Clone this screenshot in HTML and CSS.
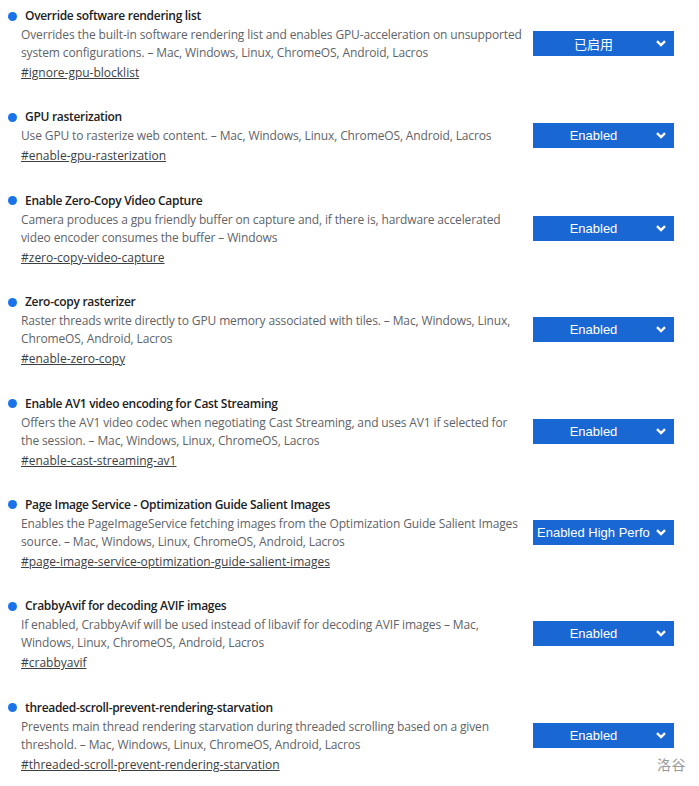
FILE: index.html
```html
<!DOCTYPE html>
<html lang="en">
<head>
<meta charset="utf-8">
<title>Flags</title>
<link rel="stylesheet" href="styles.css">
</head>
<body>
<div class="list">
  <div class="experiment">
    <div class="text">
      <div class="title"><span class="dot"></span>Override software rendering list</div>
      <p class="desc">Overrides the built-in software rendering list and enables GPU-acceleration on unsupported system configurations. – Mac, Windows, Linux, ChromeOS, Android, Lacros</p>
      <a class="link" href="#ignore-gpu-blocklist">#ignore-gpu-blocklist</a>
    </div>
    <div class="select"><span class="label cjk">已启用</span><svg class="chev" width="10" height="7" viewBox="0 0 10 7"><path d="M1 1.2 L5 5 L9 1.2" fill="none" stroke="#fff" stroke-width="2.4"/></svg></div>
  </div>
  <div class="experiment">
    <div class="text">
      <div class="title"><span class="dot"></span>GPU rasterization</div>
      <p class="desc">Use GPU to rasterize web content. – Mac, Windows, Linux, ChromeOS, Android, Lacros</p>
      <a class="link" href="#enable-gpu-rasterization">#enable-gpu-rasterization</a>
    </div>
    <div class="select"><span class="label">Enabled</span><svg class="chev" width="10" height="7" viewBox="0 0 10 7"><path d="M1 1.2 L5 5 L9 1.2" fill="none" stroke="#fff" stroke-width="2.4"/></svg></div>
  </div>
  <div class="experiment">
    <div class="text">
      <div class="title"><span class="dot"></span>Enable Zero-Copy Video Capture</div>
      <p class="desc">Camera produces a gpu friendly buffer on capture and, if there is, hardware accelerated video encoder consumes the buffer – Windows</p>
      <a class="link" href="#zero-copy-video-capture">#zero-copy-video-capture</a>
    </div>
    <div class="select"><span class="label">Enabled</span><svg class="chev" width="10" height="7" viewBox="0 0 10 7"><path d="M1 1.2 L5 5 L9 1.2" fill="none" stroke="#fff" stroke-width="2.4"/></svg></div>
  </div>
  <div class="experiment">
    <div class="text">
      <div class="title"><span class="dot"></span>Zero-copy rasterizer</div>
      <p class="desc">Raster threads write directly to GPU memory associated with tiles. – Mac, Windows, Linux, ChromeOS, Android, Lacros</p>
      <a class="link" href="#enable-zero-copy">#enable-zero-copy</a>
    </div>
    <div class="select"><span class="label">Enabled</span><svg class="chev" width="10" height="7" viewBox="0 0 10 7"><path d="M1 1.2 L5 5 L9 1.2" fill="none" stroke="#fff" stroke-width="2.4"/></svg></div>
  </div>
  <div class="experiment">
    <div class="text">
      <div class="title"><span class="dot"></span>Enable AV1 video encoding for Cast Streaming</div>
      <p class="desc">Offers the AV1 video codec when negotiating Cast Streaming, and uses AV1 if selected for the session. – Mac, Windows, Linux, ChromeOS, Lacros</p>
      <a class="link" href="#enable-cast-streaming-av1">#enable-cast-streaming-av1</a>
    </div>
    <div class="select"><span class="label">Enabled</span><svg class="chev" width="10" height="7" viewBox="0 0 10 7"><path d="M1 1.2 L5 5 L9 1.2" fill="none" stroke="#fff" stroke-width="2.4"/></svg></div>
  </div>
  <div class="experiment">
    <div class="text">
      <div class="title"><span class="dot"></span>Page Image Service - Optimization Guide Salient Images</div>
      <p class="desc">Enables the PageImageService fetching images from the Optimization Guide Salient Images source. – Mac, Windows, Linux, ChromeOS, Android, Lacros</p>
      <a class="link" href="#page-image-service-optimization-guide-salient-images">#page-image-service-optimization-guide-salient-images</a>
    </div>
    <div class="select"><span class="label">Enabled High Performance</span><svg class="chev" width="10" height="7" viewBox="0 0 10 7"><path d="M1 1.2 L5 5 L9 1.2" fill="none" stroke="#fff" stroke-width="2.4"/></svg></div>
  </div>
  <div class="experiment">
    <div class="text">
      <div class="title"><span class="dot"></span>CrabbyAvif for decoding AVIF images</div>
      <p class="desc">If enabled, CrabbyAvif will be used instead of libavif for decoding AVIF images – Mac, Windows, Linux, ChromeOS, Android, Lacros</p>
      <a class="link" href="#crabbyavif">#crabbyavif</a>
    </div>
    <div class="select"><span class="label">Enabled</span><svg class="chev" width="10" height="7" viewBox="0 0 10 7"><path d="M1 1.2 L5 5 L9 1.2" fill="none" stroke="#fff" stroke-width="2.4"/></svg></div>
  </div>
  <div class="experiment">
    <div class="text">
      <div class="title"><span class="dot"></span>threaded-scroll-prevent-rendering-starvation</div>
      <p class="desc">Prevents main thread rendering starvation during threaded scrolling based on a given threshold. – Mac, Windows, Linux, ChromeOS, Android, Lacros</p>
      <a class="link" href="#threaded-scroll-prevent-rendering-starvation">#threaded-scroll-prevent-rendering-starvation</a>
    </div>
    <div class="select"><span class="label">Enabled</span><svg class="chev" width="10" height="7" viewBox="0 0 10 7"><path d="M1 1.2 L5 5 L9 1.2" fill="none" stroke="#fff" stroke-width="2.4"/></svg></div>
  </div>
</div>
<div class="watermark">洛谷</div>
</body>
</html>
```

FILE: styles.css
```css
html, body {
  margin: 0;
  padding: 0;
  background: #fff;
}
body {
  font-family: "Open Sans", "Noto Sans CJK SC", sans-serif;
  position: relative;
  width: 699px;
  height: 786px;
  overflow: hidden;
}
.list {
  display: flex;
  flex-direction: column;
  gap: 26.4px;
  padding: 7px 25px 0 8px;
}
.experiment {
  display: flex;
  align-items: center;
  justify-content: space-between;
}
.text {
  flex: 1;
  min-width: 0;
  display: flex;
  flex-direction: column;
  align-items: flex-start;
}
.title {
  display: flex;
  align-items: center;
  font-size: 12px;
  font-weight: 600;
  letter-spacing: -0.3px;
  line-height: 18px;
  color: #202124;
  margin-bottom: 1px;
}
.dot {
  width: 9px;
  height: 9px;
  border-radius: 50%;
  background: #1a73e8;
  margin-right: 8px;
  flex: none;
}
.desc {
  width: 504px;
  margin: 0 0 2px 13px;
  font-size: 12px;
  letter-spacing: -0.13px;
  line-height: 18px;
  color: #5f6368;
}
.link {
  margin-left: 13px;
  font-size: 12px;
  line-height: 18px;
  color: #3c4043;
  text-decoration: underline;
}
.select {
  width: 141px;
  height: 25px;
  margin-bottom: 2px;
  background: #1967d2;
  display: flex;
  align-items: center;
  flex: none;
  color: #fff;
  font-family: "Liberation Sans", "Noto Sans CJK SC", sans-serif;
  font-size: 13px;
}
.label {
  flex: 1;
  min-width: 0;
  text-align: center;
  white-space: nowrap;
  overflow: hidden;
  padding-left: 4px;
  margin-right: 6px;
}
.cjk {
  font-family: "Noto Sans CJK SC", sans-serif;
}
.chev {
  flex: none;
  margin-right: 8px;
}
.watermark {
  position: absolute;
  right: 13px;
  bottom: 12px;
  font-family: "Noto Sans CJK SC", sans-serif;
  font-size: 14px;
  color: #9a9a9a;
  letter-spacing: 0.5px;
}
```
